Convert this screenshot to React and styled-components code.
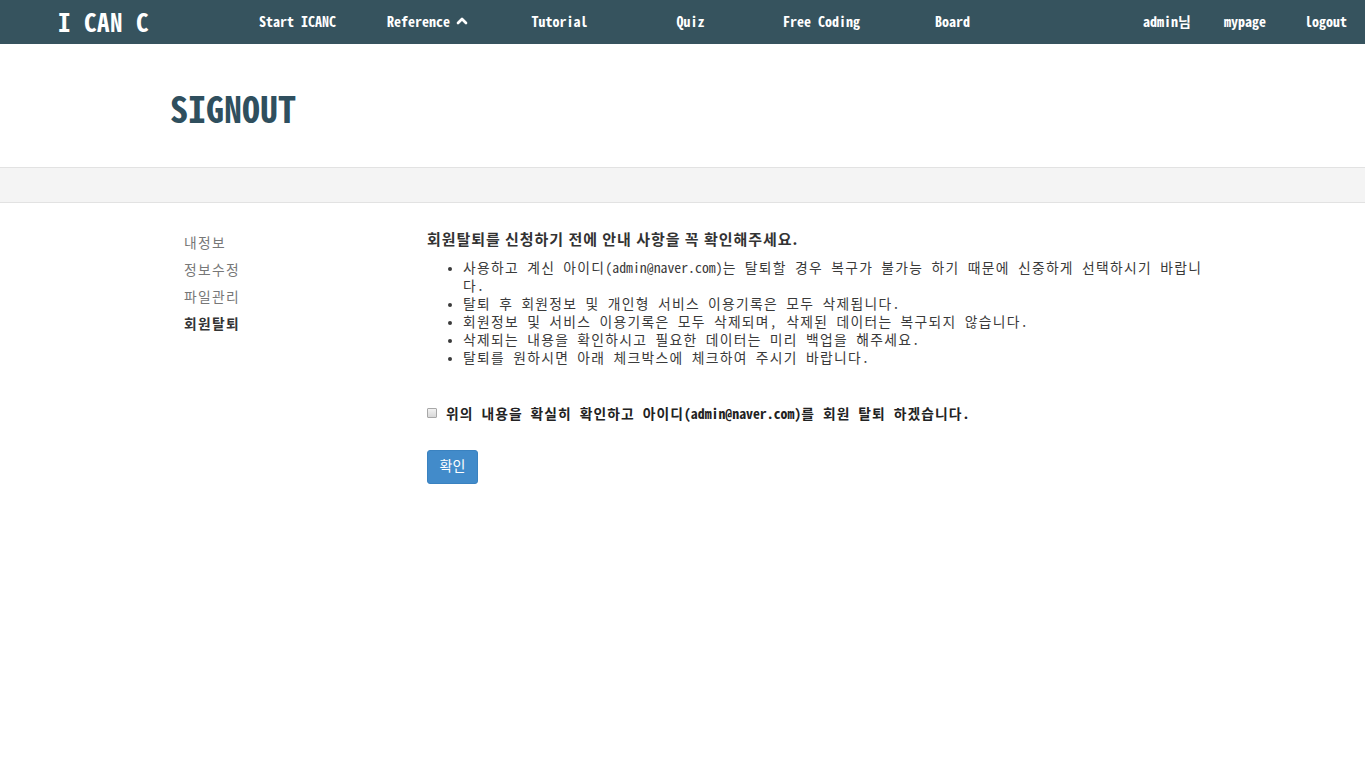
import React from 'react';
import styled, { createGlobalStyle } from 'styled-components';
import { ChevronUp } from 'lucide-react';

const MONO = `"Noto Sans Mono CJK KR", "DejaVu Sans Mono", "Noto Sans CJK KR", monospace`;
const SANS = `"Noto Sans CJK KR", "Noto Sans", sans-serif`;

const GlobalStyle = createGlobalStyle`
  body {
    margin: 0;
    background: #ffffff;
    font-family: ${MONO};
    color: #333;
  }
  * { box-sizing: border-box; }
`;

const NavBar = styled.nav`
  display: flex;
  align-items: center;
  height: 44px;
  padding-bottom: 2px;
  background-color: #36535e;
  color: #ffffff;
`;

const Logo = styled.div`
  width: 232px;
  padding-left: 58px;
  font-size: 25px;
  font-weight: bold;
  letter-spacing: 0.5px;
`;

const MenuList = styled.ul`
  display: flex;
  margin: 0;
  padding: 0;
  list-style: none;
  flex: 1;
`;

const MenuItem = styled.li`
  width: 131px;
  display: flex;
  justify-content: center;
  align-items: center;
  gap: 4px;
  font-size: 14px;
  font-weight: bold;
`;

const UserMenu = styled.div`
  display: flex;
  padding-right: 18px;
`;

const UserLink = styled.span`
  padding-left: ${p => p.$gap}px;
  font-size: 14px;
  font-weight: bold;
`;

const PageHeader = styled.header`
  height: 124px;
  border-bottom: 1px solid #e2e2e2;
  display: flex;
  align-items: center;
  padding-left: 170px;
  padding-top: 2px;
`;

const PageTitle = styled.h1`
  margin: 0;
  font-size: 36px;
  font-weight: bold;
  color: #2f4f5e;
`;

const Band = styled.div`
  height: 35px;
  background: #f4f4f4;
  border-bottom: 1px solid #e2e2e2;
`;

const Container = styled.div`
  width: 1025px;
  margin: 0 auto;
  display: flex;
  padding-top: 26px;
`;

const SideNav = styled.ul`
  flex: 0 0 257px;
  margin: 2px 0 0;
  padding: 0 0 0 14px;
  list-style: none;
`;

const SideItem = styled.li`
  height: 27px;
  line-height: 22px;
  font-size: 13.8px;
  letter-spacing: 1.3px;
  color: ${p => (p.$active ? '#333' : '#777')};
  font-weight: ${p => (p.$active ? 'bold' : 'normal')};
`;

const Main = styled.section`
  flex: 0 0 783px;
`;

const Notice = styled.h4`
  margin: 0 0 9px;
  font-family: ${SANS};
  font-size: 15px;
  letter-spacing: 0.95px;
  font-weight: bold;
  color: #333;
  line-height: 20px;
`;

const NoticeList = styled.ul`
  margin: 0;
  padding-left: 36px;
  font-size: 13.8px;
  letter-spacing: 1.3px;
  line-height: 18px;
  color: #3a3a3a;
  li::marker { font-size: 10px; }
`;

const Latin = styled.span`
  letter-spacing: 0;
`;

const AgreeRow = styled.label`
  display: flex;
  align-items: center;
  gap: 9px;
  margin-top: 37px;
  font-size: 13.8px;
  letter-spacing: 1.05px;
  font-weight: bold;
  color: #222;
`;

const CheckBox = styled.input`
  appearance: none;
  margin: 0;
  width: 10px;
  height: 10px;
  border: 1px solid #a8a8a8;
  border-radius: 1px;
  background: linear-gradient(#f2f2f2, #d8d8d8);
`;

const SubmitButton = styled.button`
  margin-top: 27px;
  width: 51px;
  height: 34px;
  border: 1px solid #3a82c0;
  border-radius: 3px;
  background: #428bca;
  color: #ffffff;
  font-family: ${SANS};
  font-size: 14px;
  padding: 0 0 4px;
`;

const EMAIL = '(admin@naver.com)';

const withEmail = text => {
  const parts = text.split(EMAIL);
  if (parts.length === 1) return text;
  return (
    <>
      {parts[0]}
      <Latin>{EMAIL}</Latin>
      {parts[1]}
    </>
  );
};

const notices = [
  '사용하고 계신 아이디(admin@naver.com)는 탈퇴할 경우 복구가 불가능 하기 때문에 신중하게 선택하시기 바랍니다.',
  '탈퇴 후 회원정보 및 개인형 서비스 이용기록은 모두 삭제됩니다.',
  '회원정보 및 서비스 이용기록은 모두 삭제되며, 삭제된 데이터는 복구되지 않습니다.',
  '삭제되는 내용을 확인하시고 필요한 데이터는 미리 백업을 해주세요.',
  '탈퇴를 원하시면 아래 체크박스에 체크하여 주시기 바랍니다.',
];

const menus = ['Start ICANC', 'Reference', 'Tutorial', 'Quiz', 'Free Coding', 'Board'];

export default function App() {
  return (
    <>
      <GlobalStyle />
      <NavBar>
        <Logo>I CAN C</Logo>
        <MenuList>
          {menus.map(menu => (
            <MenuItem key={menu}>
              {menu}
              {menu === 'Reference' && <ChevronUp size={16} strokeWidth={4} />}
            </MenuItem>
          ))}
        </MenuList>
        <UserMenu>
          <UserLink $gap={0}>admin님</UserLink>
          <UserLink $gap={33}>mypage</UserLink>
          <UserLink $gap={39}>logout</UserLink>
        </UserMenu>
      </NavBar>
      <PageHeader>
        <PageTitle>SIGNOUT</PageTitle>
      </PageHeader>
      <Band />
      <Container>
        <SideNav>
          <SideItem>내정보</SideItem>
          <SideItem>정보수정</SideItem>
          <SideItem>파일관리</SideItem>
          <SideItem $active>회원탈퇴</SideItem>
        </SideNav>
        <Main>
          <Notice>회원탈퇴를 신청하기 전에 안내 사항을 꼭 확인해주세요.</Notice>
          <NoticeList>
            {notices.map(n => (
              <li key={n}>{withEmail(n)}</li>
            ))}
          </NoticeList>
          <AgreeRow>
            <CheckBox type="checkbox" />
            <span>
              위의 내용을 확실히 확인하고 아이디{withEmail(EMAIL)}를 회원 탈퇴 하겠습니다.
            </span>
          </AgreeRow>
          <SubmitButton>확인</SubmitButton>
        </Main>
      </Container>
    </>
  );
}
